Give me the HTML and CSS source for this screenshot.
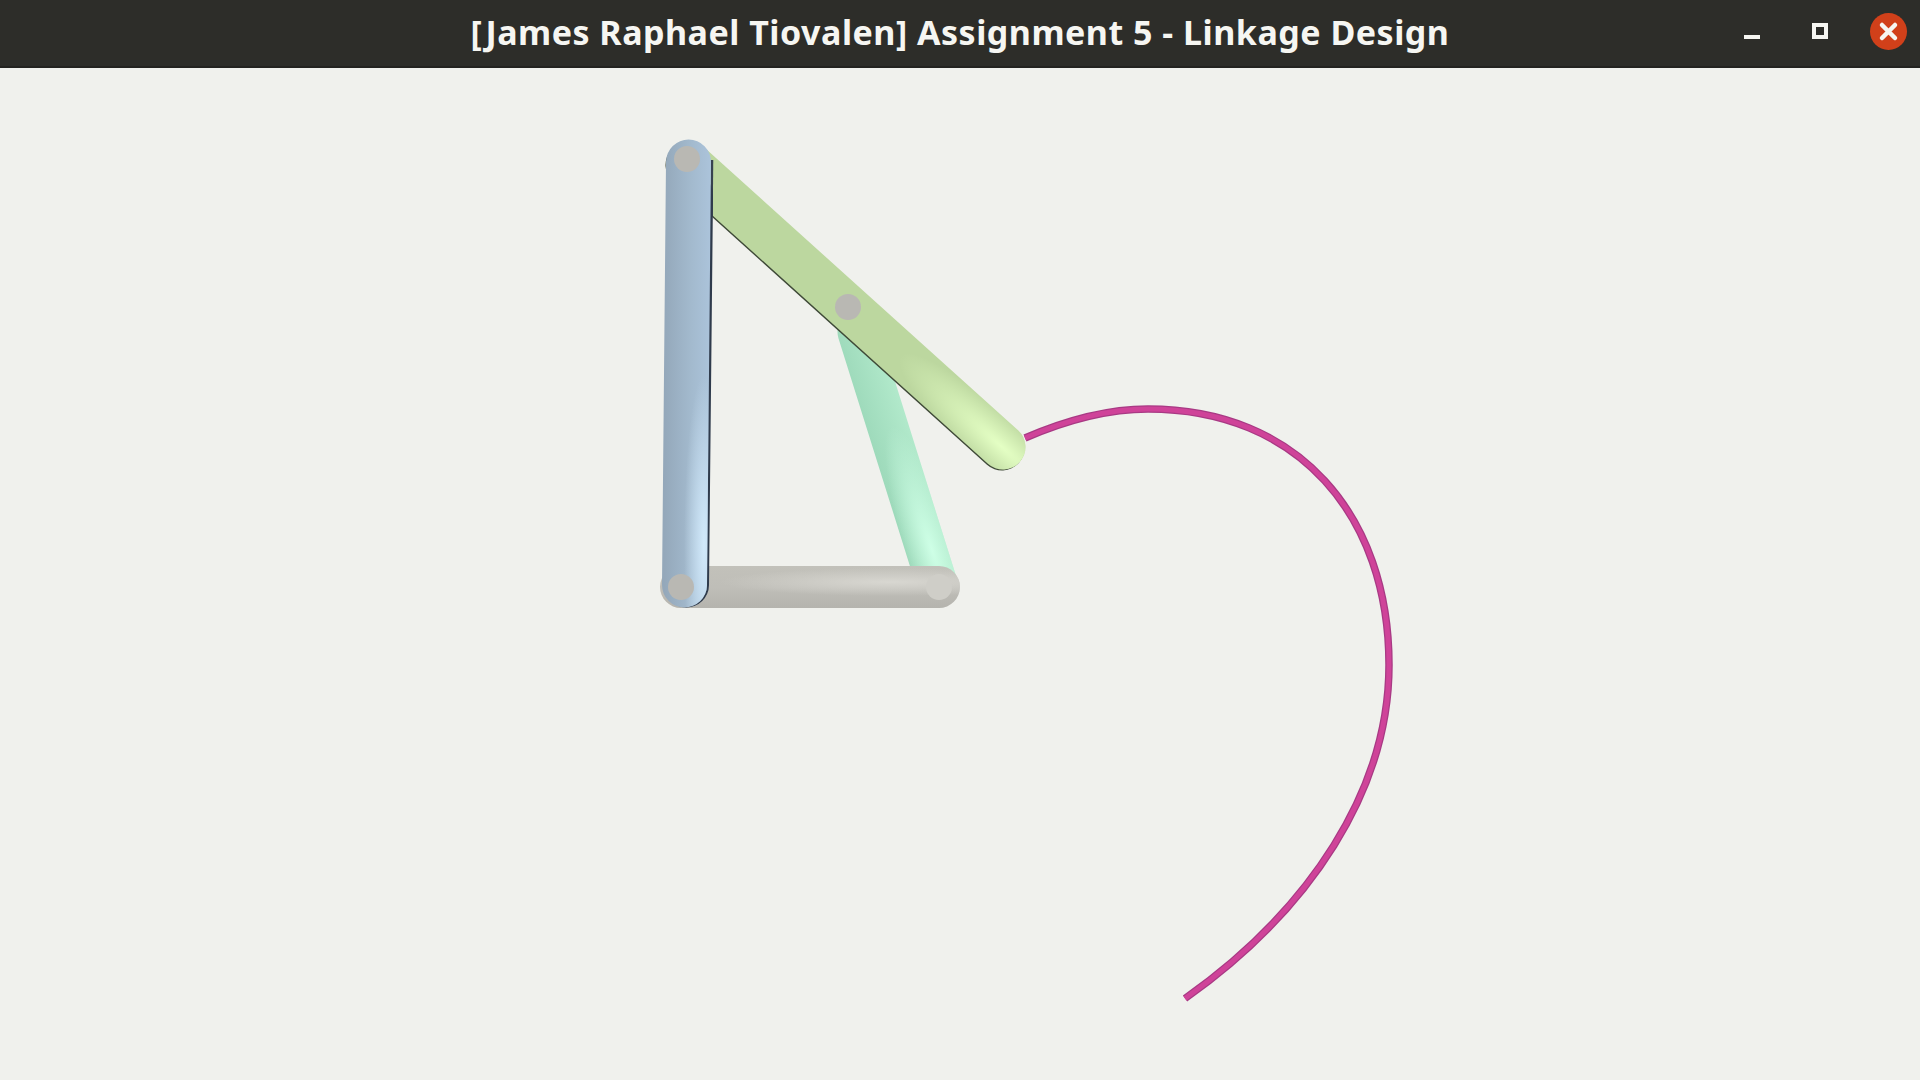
FILE: index.html
```html
<!DOCTYPE html>
<html lang="en">

<head>
    <meta charset="UTF-8">
    <title>Assignment 5 - Linkage Design</title>
    <link rel="stylesheet" href="styles.css">
</head>

<body>
    <div class="titlebar">
        <div class="title">[James Raphael Tiovalen] Assignment 5 - Linkage Design</div>
        <div class="controls">
            <div class="btn"><div class="min-icon"></div></div>
            <div class="btn"><div class="max-icon"></div></div>
            <div class="btn close">
                <svg width="37" height="37" viewBox="0 0 37 37">
                    <path class="close-x" d="M12 12L25 25M25 12L12 25" />
                </svg>
            </div>
        </div>
    </div>

    <svg class="stage" viewBox="0 68 1920 1012">
        <defs>
            <linearGradient id="blueBase" gradientUnits="userSpaceOnUse" x1="664" y1="0" x2="710" y2="0">
                <stop offset="0" stop-color="#94a8ba" />
                <stop offset="0.6" stop-color="#a3bace" />
                <stop offset="1" stop-color="#abc3da" />
            </linearGradient>
            <radialGradient id="blueLight" gradientUnits="userSpaceOnUse" cx="0" cy="0" r="1"
                gradientTransform="translate(704 545) scale(20 170)">
                <stop offset="0" stop-color="#d6eeff" stop-opacity="0.9" />
                <stop offset="1" stop-color="#d6eeff" stop-opacity="0" />
            </radialGradient>
            <radialGradient id="greenLight" gradientUnits="userSpaceOnUse" cx="0" cy="0" r="1"
                gradientTransform="translate(1001 446) rotate(42) scale(135 28)">
                <stop offset="0" stop-color="#e4ffc4" />
                <stop offset="1" stop-color="#e4ffc4" stop-opacity="0" />
            </radialGradient>
            <linearGradient id="mintBase" gradientUnits="userSpaceOnUse" x1="880" y1="470" x2="925" y2="455">
                <stop offset="0" stop-color="#9edabb" />
                <stop offset="1" stop-color="#b4ebcd" />
            </linearGradient>
            <radialGradient id="mintLight" gradientUnits="userSpaceOnUse" cx="0" cy="0" r="1"
                gradientTransform="translate(932 550) rotate(72) scale(130 26)">
                <stop offset="0" stop-color="#ceffe6" />
                <stop offset="1" stop-color="#ceffe6" stop-opacity="0" />
            </radialGradient>
            <linearGradient id="grayBase" gradientUnits="userSpaceOnUse" x1="0" y1="566" x2="0" y2="608">
                <stop offset="0" stop-color="#c2c1ba" />
                <stop offset="0.5" stop-color="#bfbeb8" />
                <stop offset="1" stop-color="#b5b4ae" />
            </linearGradient>
            <radialGradient id="grayLight" gradientUnits="userSpaceOnUse" cx="0" cy="0" r="1"
                gradientTransform="translate(890 582) scale(170 14)">
                <stop offset="0" stop-color="#d8d7d1" />
                <stop offset="1" stop-color="#d8d7d1" stop-opacity="0" />
            </radialGradient>
        </defs>

        <!-- coupler curve -->
        <path class="curve-edge" d="M1025 438C1062 422 1106 409 1148 409C1298 409 1389 515 1389 665C1389 790 1310 910 1185 998.5" />
        <path class="curve-core" d="M1025 438C1062 422 1106 409 1148 409C1298 409 1389 515 1389 665C1389 790 1310 910 1185 998.5" />

        <!-- links, back to front -->
        <line class="link mint-base" x1="858" y1="332" x2="938" y2="587" />
        <line class="link mint-light" x1="858" y1="332" x2="938" y2="587" />

        <line class="link gray-base" x1="681" y1="587" x2="939" y2="587" />
        <line class="link gray-light" x1="681" y1="587" x2="939" y2="587" />
        <circle class="pin pin-light" cx="939" cy="587" r="13" />

        <line class="link green-edge" x1="688" y1="165" x2="1002" y2="448" />
        <line class="link green-base" x1="689" y1="164" x2="1003" y2="447" />
        <line class="link green-light" x1="689" y1="164" x2="1003" y2="447" />
        <circle class="pin" cx="848" cy="307" r="13" />

        <line class="blue-top-edge" x1="712" y1="160" x2="711.5" y2="216" />
        <line class="link blue-edge" x1="690.5" y1="195" x2="686.5" y2="585" />
        <line class="link blue-base" x1="688.5" y1="162" x2="684.5" y2="585" />
        <line class="link blue-light" x1="688.5" y1="162" x2="684.5" y2="585" />
        <circle class="pin" cx="687" cy="159" r="13" />
        <circle class="pin" cx="681" cy="587" r="13" />
    </svg>
</body>

</html>
```

FILE: styles.css
```css
* {
    box-sizing: border-box;
}

body {
    margin: 0;
    height: 100vh;
    display: flex;
    flex-direction: column;
    background: #f0f1ed;
    overflow: hidden;
}

.titlebar {
    height: 68px;
    display: grid;
    grid-template-columns: 1fr auto 1fr;
    background: #2d2d29;
    border-bottom: 2px solid #232320;
    color: #f6f6f2;
}

.title {
    grid-column: 2;
    line-height: 65px;
    font-family: "Noto Sans", sans-serif;
    font-weight: 700;
    font-size: 34px;
    letter-spacing: 0.5px;
    white-space: nowrap;
}

.controls {
    grid-column: 3;
    justify-self: end;
    display: flex;
    gap: 31px;
    padding: 12.5px 13.5px 0 0;
}

.btn {
    width: 37px;
    height: 37px;
    display: flex;
    align-items: center;
    justify-content: center;
}

.min-icon {
    width: 16px;
    height: 4px;
    margin-top: 12px;
    background: #f6f6f2;
}

.max-icon {
    width: 16px;
    height: 16px;
    border: 4px solid #f6f6f2;
}

.close {
    border-radius: 50%;
    background: #d1401a;
}

.close-x {
    fill: none;
    stroke: #f6f6f2;
    stroke-width: 4.5;
    stroke-linecap: round;
}

.stage {
    display: block;
    width: 1920px;
    height: 1012px;
    flex: none;
}

.curve-edge {
    fill: none;
    stroke: #a83a84;
    stroke-width: 7.5;
}

.curve-core {
    fill: none;
    stroke: #cf4399;
    stroke-width: 5;
}

.link {
    fill: none;
    stroke-linecap: round;
}

.mint-base,
.mint-light {
    stroke-width: 41px;
}

.mint-base {
    stroke: url(#mintBase);
}

.mint-light {
    stroke: url(#mintLight);
}

.gray-base,
.gray-light {
    stroke-width: 42px;
}

.gray-base {
    stroke: url(#grayBase);
}

.gray-light {
    stroke: url(#grayLight);
}

.green-edge,
.green-base,
.green-light {
    stroke-width: 45px;
}

.green-edge {
    stroke: #3f4a38;
}

.green-base {
    stroke: #bcd79f;
}

.green-light {
    stroke: url(#greenLight);
}

.blue-edge,
.blue-base,
.blue-light {
    stroke-width: 45px;
}

.blue-edge {
    stroke: #2f3b4c;
}

.blue-top-edge {
    stroke: #36424f;
    stroke-width: 2.5px;
}

.blue-base {
    stroke: url(#blueBase);
}

.blue-light {
    stroke: url(#blueLight);
}

.pin {
    fill: #b9b8b3;
}

.pin-light {
    fill: #cfcec8;
}
```
